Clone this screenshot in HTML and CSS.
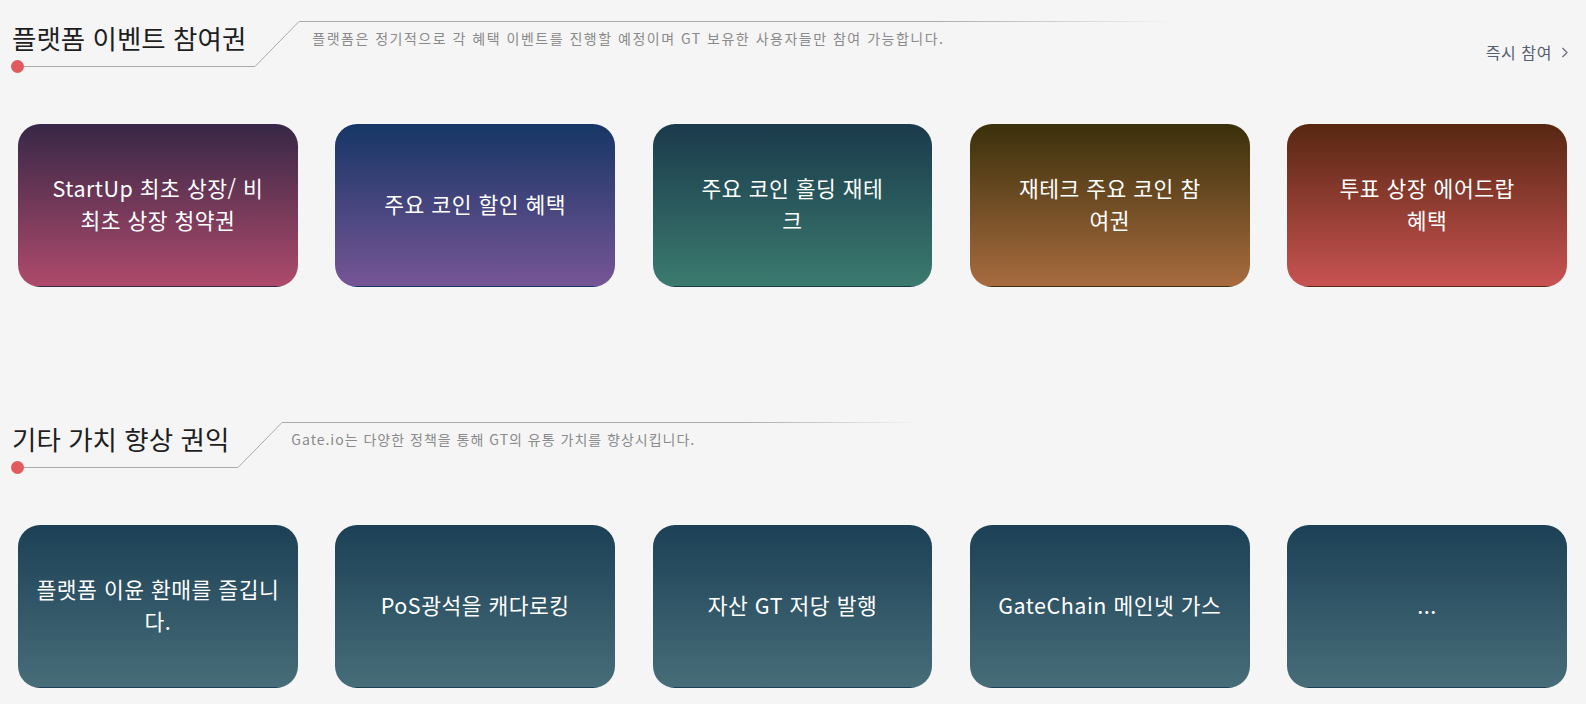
FILE: index.html
```html
<!DOCTYPE html>
<html lang="ko">
<head>
    <meta charset="UTF-8">
    <meta name="viewport" content="width=device-width, initial-scale=1.0">
    <title>GT 권익</title>
    <link rel="stylesheet" href="styles.css">
</head>
<body>
    <!-- Platform event section -->
    <section class="section section-events">
        <div class="section-head">
            <div class="head-title">
                <h2>플랫폼 이벤트 참여권</h2>
            </div>
            <svg class="head-slant" width="44" height="67" viewBox="0 0 44 67">
                <line x1="0" y1="66.5" x2="44" y2="21.5" stroke="#aaa" stroke-width="1"/>
            </svg>
            <div class="head-desc">
                <p>플랫폼은 정기적으로 각 혜택 이벤트를 진행할 예정이며 GT 보유한 사용자들만 참여 가능합니다.</p>
            </div>
            <a class="head-link" href="#">즉시 참여
                <svg width="8" height="11" viewBox="0 0 8 11"><polyline points="1.5,1 6,5.5 1.5,10" fill="none" stroke="#667" stroke-width="1.2"/></svg>
            </a>
        </div>

        <div class="cards">
            <div class="card card-startup"><span>StartUp 최초 상장/ 비<br>최초 상장 청약권</span></div>
            <div class="card card-discount"><span>주요 코인 할인 혜택</span></div>
            <div class="card card-holding"><span>주요 코인 홀딩 재테<br>크</span></div>
            <div class="card card-finance"><span>재테크 주요 코인 참<br>여권</span></div>
            <div class="card card-vote"><span>투표 상장 에어드랍<br>혜택</span></div>
        </div>
    </section>

    <!-- Other value section -->
    <section class="section">
        <div class="section-head">
            <div class="head-title">
                <h2>기타 가치 향상 권익</h2>
            </div>
            <svg class="head-slant" width="44" height="67" viewBox="0 0 44 67">
                <line x1="0" y1="66.5" x2="44" y2="21.5" stroke="#aaa" stroke-width="1"/>
            </svg>
            <div class="head-desc head-desc-short">
                <p>Gate.io는 다양한 정책을 통해 GT의 유통 가치를 향상시킵니다.</p>
            </div>
        </div>

        <div class="cards">
            <div class="card card-value"><span>플랫폼 이윤 환매를 즐깁니<br>다.</span></div>
            <div class="card card-value"><span>PoS광석을 캐다로킹</span></div>
            <div class="card card-value"><span>자산 GT 저당 발행</span></div>
            <div class="card card-value"><span>GateChain 메인넷 가스</span></div>
            <div class="card card-value"><span>...</span></div>
        </div>
    </section>
</body>
</html>
```

FILE: styles.css
```css
/* Page */
body {
    margin: 0;
    background-color: #f5f5f5;
    color: #222;
    font-family: "Noto Sans CJK KR", "Noto Sans", sans-serif;
}

.section {
    padding: 0 17px 0 11px;
}

.section-events {
    height: 401px;
}

/* Section header with the decorative line */
.section-head {
    display: flex;
    align-items: flex-start;
    height: 67px;
}

.head-title {
    position: relative;
    padding: 22px 9px 13px 1px;
    border-bottom: 1px solid #aaa;
}

/* red dot at the start of the line */
.head-title::before {
    content: "";
    position: absolute;
    left: 0;
    bottom: -7px;
    width: 13px;
    height: 13px;
    border-radius: 50%;
    background-color: #e05a5e;
}

.head-title h2 {
    margin: 0;
    font-size: 26.5px;
    font-weight: 400;
    line-height: 31px;
    color: #1e1e1e;
}

.head-slant {
    display: block;
    flex: none;
}

.head-desc {
    margin-top: 21px;
    padding: 6px 230px 0 13px;
    border-top: 1px solid transparent;
    border-image: linear-gradient(to right, #aaa 0, #aaa 72%, rgba(170, 170, 170, 0)) 1;
}

.head-desc p {
    margin: 0;
    font-size: 14px;
    letter-spacing: 1.5px;
    line-height: 20px;
    color: #8a8a8a;
}

.head-desc-short {
    padding: 6px 222px 0 9px;
}

.head-desc-short p {
    letter-spacing: 1px;
}

.head-link {
    margin-left: auto;
    padding-top: 43px;
    display: flex;
    align-items: center;
    gap: 9px;
    font-size: 16px;
    letter-spacing: 0.6px;
    line-height: 18px;
    color: #556070;
    text-decoration: none;
}

/* Benefit cards */
.cards {
    margin-top: 57px;
    padding: 0 2px 0 7px;
    display: grid;
    grid-template-columns: repeat(5, 1fr);
    column-gap: 37.5px;
}

.card {
    --top: #333;
    --bottom: #666;
    height: 163px;
    border-radius: 22px;
    display: flex;
    align-items: center;
    justify-content: center;
    padding: 0 20px 4px;
    box-sizing: border-box;
    text-align: center;
    color: #fff;
    font-size: 21.5px;
    letter-spacing: 0.5px;
    line-height: 32px;
    background: linear-gradient(var(--top), var(--bottom) calc(100% - 1px), var(--top) calc(100% - 1px));
}

.card-startup  { --top: #372746; --bottom: #ae4a6b; }
.card-discount { --top: #163665; --bottom: #765596; }
.card-holding  { --top: #1a3a4b; --bottom: #3b7a6f; }
.card-finance  { --top: #3a300b; --bottom: #a86b3f; }
.card-vote     { --top: #572711; --bottom: #c85252; }

.card-value {
    --top: #1c4055;
    --bottom: #476d79;
    padding: 0 10px 4px;
}
```
